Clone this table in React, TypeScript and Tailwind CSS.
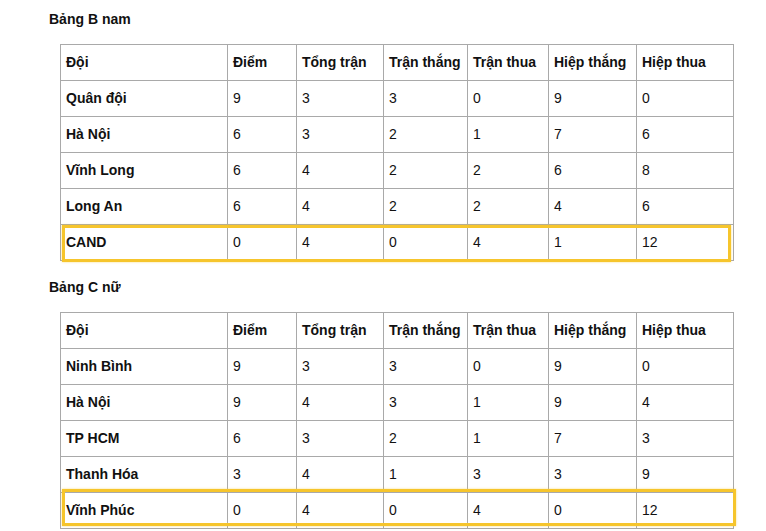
const headers = ["Đội", "Điểm", "Tổng trận", "Trận thắng", "Trận thua", "Hiệp thắng", "Hiệp thua"];

type Row = [string, number, number, number, number, number, number];

const groupB: Row[] = [
  ["Quân đội", 9, 3, 3, 0, 9, 0],
  ["Hà Nội", 6, 3, 2, 1, 7, 6],
  ["Vĩnh Long", 6, 4, 2, 2, 6, 8],
  ["Long An", 6, 4, 2, 2, 4, 6],
  ["CAND", 0, 4, 0, 4, 1, 12],
];

const groupC: Row[] = [
  ["Ninh Bình", 9, 3, 3, 0, 9, 0],
  ["Hà Nội", 9, 4, 3, 1, 9, 4],
  ["TP HCM", 6, 3, 2, 1, 7, 3],
  ["Thanh Hóa", 3, 4, 1, 3, 3, 9],
  ["Vĩnh Phúc", 0, 4, 0, 4, 0, 12],
];

function StandingsTable({ rows, highlight }: { rows: Row[]; highlight: string }) {
  return (
    <div className="relative ml-[11px] w-[673px]">
      <table className="w-[673px] table-fixed border-collapse border border-[#a9a9a9] text-[14px] text-[#111]">
        <colgroup>
          <col className="w-[167px]" />
          <col className="w-[69px]" />
          <col className="w-[87px]" />
          <col className="w-[84px]" />
          <col className="w-[81px]" />
          <col className="w-[88px]" />
          <col className="w-[97px]" />
        </colgroup>
        <thead>
          <tr>
            {headers.map((h) => (
              <th key={h} className="h-[36px] border border-[#a9a9a9] px-[5px] text-left font-bold">
                {h}
              </th>
            ))}
          </tr>
        </thead>
        <tbody>
          {rows.map((r) => (
            <tr key={r[0]}>
              {r.map((v, i) => (
                <td
                  key={i}
                  className={
                    i === 0
                      ? "h-[36px] border border-[#a9a9a9] px-[5px] font-bold"
                      : "h-[36px] border border-[#a9a9a9] px-[5px]"
                  }
                >
                  {v}
                </td>
              ))}
            </tr>
          ))}
        </tbody>
      </table>
      {/* highlight around the last team */}
      <div
        className={
          highlight === "b"
            ? "absolute left-[2px] top-[181px] h-[37px] w-[669px] border-[3px] border-[#f6c52c] shadow-[0_0_2px_rgba(246,197,44,0.6)]"
            : "absolute left-[2px] top-[177px] h-[37px] w-[674px] border-[3px] border-[#f6c52c] shadow-[0_0_2px_rgba(246,197,44,0.6)]"
        }
      />
    </div>
  );
}

export default function App() {
  return (
    <div
      className="min-h-screen w-[766px] bg-white pl-[49px] pt-[9px]"
      style={{ fontFamily: '"Liberation Sans", Arial, sans-serif' }}
    >
      <h3 className="mb-[15px] text-[14px] font-bold leading-[20px] text-[#111]">Bảng B nam</h3>
      <StandingsTable rows={groupB} highlight="b" />
      <h3 className="mb-[15px] mt-[16px] text-[14px] font-bold leading-[20px] text-[#111]">Bảng C nữ</h3>
      <StandingsTable rows={groupC} highlight="c" />
    </div>
  );
}
